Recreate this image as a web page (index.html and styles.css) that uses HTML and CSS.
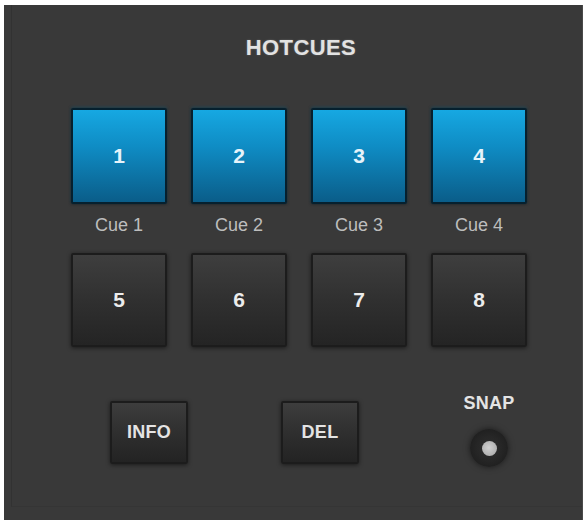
FILE: index.html
```html
<!DOCTYPE html>
<html>
<head>
<meta charset="utf-8">
<link rel="stylesheet" href="styles.css">
</head>
<body>
<div class="panel">
  <div class="frame">
    <div class="content">
      <div class="title">HOTCUES</div>
      <div class="pads">
        <div class="pad blue">1</div>
        <div class="pad blue">2</div>
        <div class="pad blue">3</div>
        <div class="pad blue">4</div>
        <div class="label">Cue 1</div>
        <div class="label">Cue 2</div>
        <div class="label">Cue 3</div>
        <div class="label">Cue 4</div>
        <div class="pad dark row2">5</div>
        <div class="pad dark row2">6</div>
        <div class="pad dark row2">7</div>
        <div class="pad dark row2">8</div>
      </div>
      <div class="controls">
        <div class="btn info">INFO</div>
        <div class="btn del">DEL</div>
        <div class="snap">
          <div class="snap-label">SNAP</div>
          <div class="led"><div class="led-dot"></div></div>
        </div>
      </div>
    </div>
  </div>
</div>
</body>
</html>
```
FILE: styles.css
```css
html {
  margin: 0;
  padding: 0;
  background: #ffffff;
  overflow: hidden;
}
body {
  margin: 0;
  padding: 5px 0 0 0;
  background: #ffffff;
  font-family: "Liberation Sans", Arial, sans-serif;
}
.panel {
  margin: 0 4px 0 4px;
  height: 530px;
  background: #393939;
  border-right: 1px solid #4a4a4a;
  box-sizing: border-box;
}
.frame {
  margin-left: 7px;
  height: 501px;
  border-left: 1px solid #323232;
  border-bottom: 1px solid #353535;
}
.content {
  margin-left: 59px;
  width: 456px;
  padding-top: 30px;
}
.title {
  text-align: center;
  color: #e2e2e2;
  font-weight: bold;
  font-size: 22px;
  letter-spacing: 0.4px;
  line-height: 26px;
  padding-left: 4px;
  text-shadow: 0 0 2px rgba(255,255,255,0.25);
}
.pads {
  display: grid;
  grid-template-columns: repeat(4, 96px);
  column-gap: 24px;
  margin-top: 47px;
}
.pad {
  height: 96px;
  box-sizing: border-box;
  display: flex;
  align-items: center;
  justify-content: center;
  color: #eef4f7;
  font-weight: bold;
  font-size: 21px;
  border-radius: 2px;
}
.pad.blue {
  background: linear-gradient(#16a8e2 0%, #0f8cc4 40%, #0a5d89 100%);
  border: 2px solid #06202e;
  box-shadow: 0 0 3px rgba(0,0,0,0.6), 0 -1px 3px rgba(20,140,190,0.35);
  color: #e6f3fa;
}
.pad.dark {
  background: linear-gradient(#3e3e3e 0%, #303030 50%, #242424 100%);
  border: 2px solid #1c1c1c;
  box-shadow: 0 1px 4px rgba(0,0,0,0.55);
  color: #ececec;
}
.pad.row2 {
  height: 94px;
  margin-top: 18px;
}
.label {
  margin-top: 11px;
  text-align: center;
  color: #bdbdbd;
  font-size: 18px;
  line-height: 20px;
}
.controls {
  display: flex;
  align-items: flex-start;
  margin-top: 47px;
}
.btn {
  width: 78px;
  height: 63px;
  box-sizing: border-box;
  margin-top: 7px;
  display: flex;
  align-items: center;
  justify-content: center;
  background: linear-gradient(#3d3d3d 0%, #2f2f2f 50%, #232323 100%);
  border: 2px solid #1c1c1c;
  border-radius: 2px;
  box-shadow: 0 1px 4px rgba(0,0,0,0.55);
  color: #e4e4e4;
  font-weight: bold;
  font-size: 18px;
  letter-spacing: 0.3px;
}
.btn.info {
  margin-left: 39px;
}
.btn.del {
  margin-left: 93px;
}
.snap {
  margin-left: 100px;
  width: 60px;
  display: flex;
  flex-direction: column;
  align-items: center;
}
.snap-label {
  color: #e4e4e4;
  font-weight: bold;
  font-size: 18px;
  line-height: 18px;
  letter-spacing: 0.3px;
}
.led {
  margin-top: 17px;
  width: 38px;
  height: 38px;
  border-radius: 50%;
  background: radial-gradient(circle, #2e2e2e 0%, #262626 45%, #1e1e1e 80%, #2a2a2a 100%);
  box-shadow: 0 0 6px rgba(0,0,0,0.55);
  display: flex;
  align-items: center;
  justify-content: center;
}
.led-dot {
  width: 15px;
  height: 15px;
  border-radius: 50%;
  background: radial-gradient(circle at 45% 45%, #d0d0d0 0%, #b0b0b0 70%, #8a8a8a 100%);
}
```
